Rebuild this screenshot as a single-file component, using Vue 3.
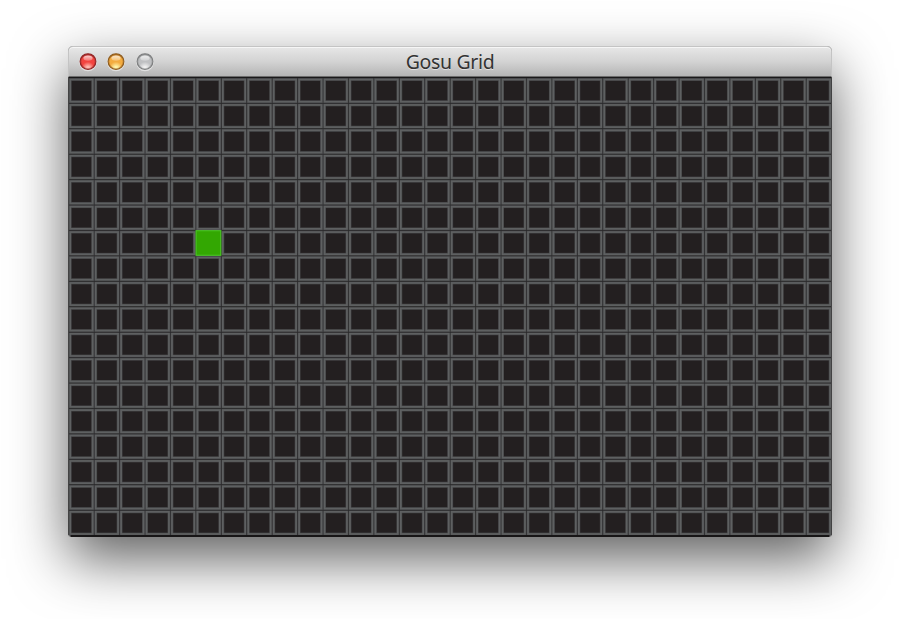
<script setup>
const columns = 30
const rows = 18
const pitch = 25.43
const active = { column: 5, row: 6 }
const lights = [
  { name: 'close', rim: '#8f2424', top: '#a82c2c', mid: '#f2443f', low: '#ffb8ae' },
  { name: 'minimize', rim: '#8c5a1e', top: '#b06c1c', mid: '#f3ac40', low: '#fff3a8' },
  { name: 'zoom', rim: '#7c7d7e', top: '#909293', mid: '#bfc0c2', low: '#efefef' },
]
</script>

<template>
  <main class="desktop">
    <section class="window">
      <header class="titlebar">
        <div class="controls">
          <svg v-for="l in lights" :key="l.name" class="light" viewBox="0 0 18 20">
            <defs>
              <radialGradient :id="l.name + '-fill'" cx="0.5" cy="0.92" r="0.9">
                <stop offset="0" :stop-color="l.low" />
                <stop offset="0.12" :stop-color="l.low" />
                <stop offset="0.45" :stop-color="l.mid" />
                <stop offset="0.8" :stop-color="l.mid" />
                <stop offset="1" :stop-color="l.top" />
              </radialGradient>
              <linearGradient :id="l.name + '-gloss'" x1="0" y1="0" x2="0" y2="1">
                <stop offset="0" stop-color="#fff" stop-opacity="0.75" />
                <stop offset="1" stop-color="#fff" stop-opacity="0.25" />
              </linearGradient>
            </defs>
            <circle cx="9" cy="10.5" r="8.7" fill="#fff" fill-opacity="0.5" />
            <circle cx="9" cy="9.6" r="7.9" :fill="`url(#${l.name}-fill)`" :stroke="l.rim" stroke-width="1.1" />
            <circle cx="9" cy="9.6" r="7" fill="none" :stroke="l.rim" stroke-opacity="0.35" stroke-width="1" />
            <ellipse cx="9" cy="6.1" rx="4.6" ry="2.6" :fill="`url(#${l.name}-gloss)`" />
          </svg>
        </div>
        <h1 class="title">Gosu Grid</h1>
      </header>
      <svg class="grid" viewBox="0 0 764 460">
        <rect x="0.4" width="763.2" height="458" fill="#1a191a" />
        <g v-for="r in rows" :key="r">
          <g v-for="c in columns" :key="c" :transform="`translate(${(c - 1) * pitch} ${(r - 1) * pitch})`">
            <rect x="2.25" y="2.5" width="22.4" height="22.2" fill="#231f20" stroke="#414143" stroke-width="2.9" />
            <rect x="2.25" y="2.5" width="22.4" height="22.2" fill="none" stroke="#5e6061" stroke-width="1.7" />
          </g>
        </g>
        <g :transform="`translate(${active.column * pitch} ${active.row * pitch})`">
          <rect x="0.9" y="1.1" width="24.8" height="24.6" fill="#33a702" stroke="#4bc926" stroke-width="1.1" />
        </g>
        <rect x="2.5" y="458" width="759" height="2" fill="#171516" />
      </svg>
    </section>
  </main>
</template>

<style>
body {
  background: #fff;
}
</style>

<style scoped>
.desktop {
  box-sizing: border-box;
  width: 900px;
  height: 619px;
  padding: 46px 68px 0;
  overflow: hidden;
  background: #fff;
}

.window {
  width: 764px;
  height: 491px;
  border-radius: 5px 5px 3px 3px;
  background: #8a8a8a;
  box-shadow: 0 22px 56px rgba(0, 0, 0, 0.63);
}

.titlebar {
  box-sizing: border-box;
  display: grid;
  grid-template-columns: 100px 1fr 100px;
  align-items: center;
  height: 31px;
  padding: 0 11px;
  border: 1px solid #c4c4c4;
  border-bottom-color: #6c6c6c;
  border-radius: 5px 5px 0 0;
  background: linear-gradient(#e7e7e7, #d3d3d3 50%, #b5b5b5);
  box-shadow: inset 0 1px 0 #f6f6f6;
}

.controls {
  display: flex;
  gap: 10.4px;
  margin-left: -1px;
}

.light {
  display: block;
  width: 18px;
  height: 20px;
}

.title {
  margin: 0;
  color: #333;
  font: 400 19.5px/24px "Noto Sans", "Open Sans", sans-serif;
  letter-spacing: -0.35px;
  text-align: center;
  text-shadow: 0 1px 0 rgba(255, 255, 255, 0.5);
}

.grid {
  display: block;
  width: 764px;
  height: 460px;
  border-radius: 0 0 3px 3px;
}
</style>
